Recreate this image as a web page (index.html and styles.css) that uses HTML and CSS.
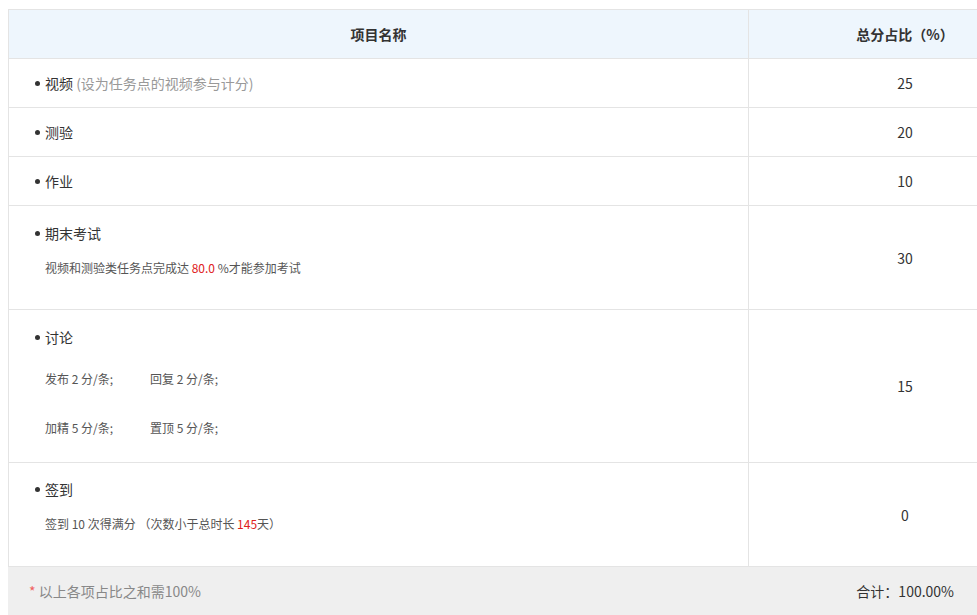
FILE: index.html
```html
<!DOCTYPE html>
<html lang="zh-CN">
<head>
<meta charset="utf-8">
<title>成绩权重</title>
<link rel="stylesheet" href="styles.css">
</head>
<body>
<div class="wrap">
  <table class="weights">
    <thead>
      <tr>
        <th class="col-name">项目名称</th>
        <th class="col-pct">总分占比（%）</th>
      </tr>
    </thead>
    <tbody>
      <tr class="simple">
        <td class="name"><span class="title">视频</span> <span class="hint">(设为任务点的视频参与计分)</span></td>
        <td class="pct">25</td>
      </tr>
      <tr class="simple">
        <td class="name"><span class="title">测验</span></td>
        <td class="pct">20</td>
      </tr>
      <tr class="simple">
        <td class="name"><span class="title">作业</span></td>
        <td class="pct">10</td>
      </tr>
      <tr class="complex exam">
        <td class="name">
          <div class="title">期末考试</div>
          <div class="sub">视频和测验类任务点完成达 <span class="red">80.0</span> %才能参加考试</div>
        </td>
        <td class="pct">30</td>
      </tr>
      <tr class="complex discuss">
        <td class="name">
          <div class="title">讨论</div>
          <div class="sub line1"><span class="rule">发布 2 分/条;</span><span class="rule">回复 2 分/条;</span></div>
          <div class="sub line2"><span class="rule">加精 5 分/条;</span><span class="rule">置顶 5 分/条;</span></div>
        </td>
        <td class="pct">15</td>
      </tr>
      <tr class="complex signin">
        <td class="name">
          <div class="title">签到</div>
          <div class="sub">签到 10 次得满分 （次数小于总时长 <span class="red">145</span>天）</div>
        </td>
        <td class="pct">0</td>
      </tr>
    </tbody>
  </table>
  <div class="footer">
    <span class="note"><span class="star">*</span> 以上各项占比之和需100%</span>
    <span class="total">合计：100.00%</span>
  </div>
</div>
</body>
</html>
```
FILE: styles.css
```css
html, body {
  overflow: hidden;
}
body {
  margin: 9px 0 0 8px;
  font-family: "Noto Sans CJK SC", "Noto Sans", sans-serif;
  font-size: 14px;
  color: #333;
  background: #fff;
}
.wrap {
  width: 1054px;
}
.weights {
  width: 1054px;
  border-collapse: collapse;
  table-layout: fixed;
}
.weights th,
.weights td {
  border: 1px solid #e4e4e4;
  padding: 0;
}
.weights thead th {
  background: #eef6fd;
  height: 48px;
  font-weight: bold;
  font-size: 14px;
  color: #333;
  text-align: center;
  line-height: 20px;
}
.col-name {
  width: 739px;
}
.pct {
  text-align: center;
  vertical-align: middle;
  line-height: 20px;
}
.name {
  padding-left: 26px !important;
  vertical-align: top;
}
.simple td {
  height: 48px;
}
.simple .name {
  vertical-align: middle;
  line-height: 20px;
}
.title {
  position: relative;
  padding-left: 10px;
  line-height: 20px;
  color: #333;
}
.title::before {
  content: "";
  position: absolute;
  left: 0;
  top: 8px;
  width: 5px;
  height: 5px;
  border-radius: 50%;
  background: #333;
}
.hint {
  color: #999;
}
.complex .name {
  padding-top: 17px !important;
}
.sub {
  padding-left: 10px;
  font-size: 12px;
  line-height: 20px;
  color: #555;
}
.red {
  color: #e02020;
}
.exam .sub {
  margin-top: 15px;
  margin-bottom: 31px;
}
.discuss .line1 {
  margin-top: 22px;
}
.discuss .line2 {
  margin-top: 29px;
  margin-bottom: 24px;
}
.rule {
  display: inline-block;
  width: 105px;
}
.signin .name {
  padding-top: 16px !important;
}
.signin .sub {
  margin-top: 15px;
  margin-bottom: 32px;
}
.footer {
  display: flex;
  justify-content: space-between;
  align-items: center;
  height: 48px;
  background: #efefef;
  padding: 0 108px 0 21px;
}
.note {
  color: #888;
}
.star {
  color: #f06060;
}
.total {
  color: #333;
}
```
